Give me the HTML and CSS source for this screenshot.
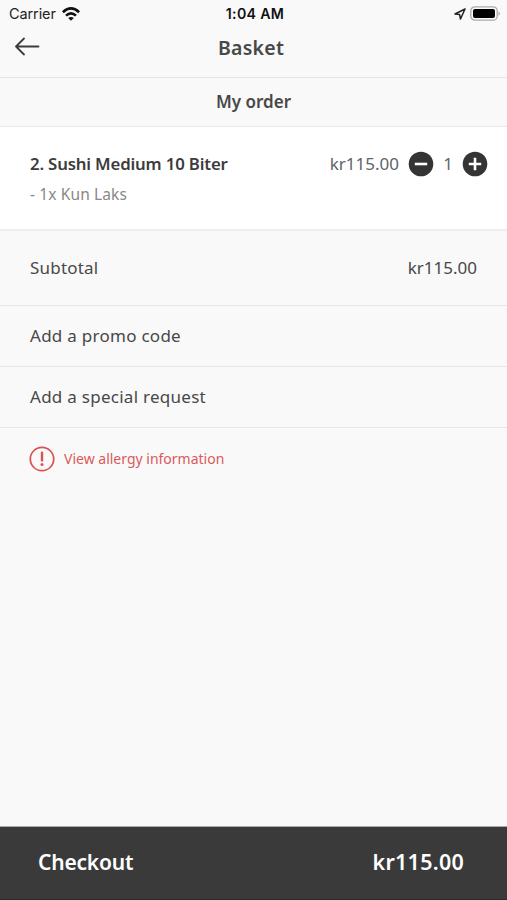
FILE: index.html
```html
<!DOCTYPE html>
<html lang="en">
<head>
<meta charset="utf-8">
<title>Basket</title>
<link rel="stylesheet" href="styles.css">
</head>
<body>
<div class="status">
  <div class="carrier"><span class="carrier-name">Carrier</span>
    <svg width="18" height="14" viewBox="0 0 18 14" fill="none" stroke="#111" stroke-width="2.6"><path d="M.9 5.2Q9-2.3 17.1 5.2M4 8.6Q9 4 14 8.6"/><path d="M9 13.8 6.2 11Q9 8.8 11.8 11Z" fill="#111" stroke="none"/></svg>
  </div>
  <span class="clock">1:04 AM</span>
  <div class="indicators">
    <svg width="12" height="12" viewBox="0 0 12 12" fill="none" stroke="#222" stroke-width="1.5" stroke-linejoin="round"><path d="M11 1 1 6l4.6.6L6.5 11Z"/></svg>
    <svg width="31" height="15" viewBox="0 0 31 15"><rect x=".8" y=".8" width="26.4" height="13.4" rx="4" fill="none" stroke="#aaa" stroke-width="1.3"/><rect x="3" y="3" width="22" height="9" rx="2" fill="#000"/><path d="M28.5 5.2q3 2.3 0 4.6Z" fill="#aaa"/></svg>
  </div>
</div>
<header class="header">
  <svg class="back" width="26" height="20" viewBox="0 0 26 20" fill="none" stroke="#3c3c3c" stroke-width="1.8" stroke-linecap="round" stroke-linejoin="round"><path d="M24.5 9.5H2M10 1.5 2 9.5l8 8"/></svg>
  <h1 class="title">Basket</h1>
</header>
<h2 class="section"><span class="section-text">My order</span></h2>
<section class="item">
  <div class="item-info">
    <div class="item-name">2. Sushi Medium 10 Biter</div>
    <div class="item-option">- 1x Kun Laks</div>
  </div>
  <div class="item-controls">
    <span class="item-price">kr115.00</span>
    <svg width="26" height="26" viewBox="0 0 26 26"><circle cx="13" cy="13" r="12.3" fill="#343434"/><path d="M6.8 13h12.4" stroke="#fff" stroke-width="2.6"/></svg>
    <span class="quantity">1</span>
    <svg width="26" height="26" viewBox="0 0 26 26"><circle cx="13" cy="13" r="12.3" fill="#343434"/><path d="M6.8 13h12.4M13 6.8v12.4" stroke="#fff" stroke-width="2.6"/></svg>
  </div>
</section>
<div class="row subtotal"><span class="subtotal-label">Subtotal</span><span class="subtotal-price">kr115.00</span></div>
<div class="row"><span class="action">Add a promo code</span></div>
<div class="row"><span class="action">Add a special request</span></div>
<div class="allergy">
  <svg width="26" height="26" viewBox="0 0 26 26" fill="none" stroke="#d9534f"><circle cx="13" cy="13" r="11.7" stroke-width="1.7"/><path d="M13 6.8v7.6" stroke-width="2.4" stroke-linecap="round"/><circle cx="13" cy="18.6" r="1.5" fill="#d9534f" stroke="none"/></svg>
  <span class="allergy-text">View allergy information</span>
</div>
<footer class="checkout"><span class="checkout-label">Checkout</span><span class="checkout-price">kr115.00</span></footer>
</body>
</html>
```
FILE: styles.css
```css
* { box-sizing: border-box; }
body {
  margin: 0;
  height: 900px;
  display: flex;
  flex-direction: column;
  background: #f9f9f9;
  color: #484848;
  font: 17px/24px "Noto Sans", sans-serif;
  white-space: nowrap;
  overflow: hidden;
}
svg { display: block; flex: none; }
.status {
  height: 28px;
  padding: 0 6px 1px 9px;
  display: grid;
  grid-template-columns: 1fr auto 1fr;
  align-items: center;
  font: 14px/20px Inter, sans-serif;
  color: #222;
}
.carrier { display: flex; align-items: center; gap: 6px; }
.carrier-name { font-size: 14.5px; margin-top: 1px; letter-spacing: -0.1px; }
.clock { margin-top: 1px; font-size: 14.2px; font-weight: 600; letter-spacing: 0.3px; color: #111; }
.indicators { display: flex; justify-content: flex-end; align-items: center; gap: 4px; }
.header {
  height: 50px;
  padding: 0 14px 11px;
  display: grid;
  grid-template-columns: 26px 1fr 31px;
  align-items: center;
  border-bottom: 1px solid #e5e5e5;
}
.title { margin: 1px 0 0; text-align: center; font-size: 19.5px; font-weight: 600; letter-spacing: 0.25px; }
.section {
  margin: 0;
  height: 49px;
  display: flex;
  justify-content: center;
  align-items: center;
  border-bottom: 1px solid #e9e9e9;
  font-size: 17px;
  font-weight: 600;
}
.item {
  height: 104px;
  padding: 24px 19px 0 30px;
  display: flex;
  justify-content: space-between;
  background: #fff;
  border-bottom: 2px solid #eee;
}
.item-name { padding-top: 1px; font-size: 16.8px; font-weight: 600; letter-spacing: -0.17px; color: #3c3c3c; }
.item-option { margin-top: 6px; font-size: 15.5px; letter-spacing: 0.12px; color: #888; }
.item-controls { display: flex; align-items: center; height: 26px; color: #60646a; }
.item-price { margin-right: 9px; }
.quantity { width: 28px; text-align: center; }
.row {
  height: 61px;
  padding: 0 30px;
  display: flex;
  align-items: center;
  justify-content: space-between;
  border-bottom: 1px solid #e7e7e7;
}
.subtotal { height: 75px; }
.subtotal-label { letter-spacing: 0.2px; }
.action { letter-spacing: 0.27px; }
.allergy { display: flex; align-items: center; gap: 9px; padding: 18px 29px; color: #d9595c; font-size: 14px; }
.checkout {
  margin-top: auto;
  height: 74px;
  padding: 0 43px 3px 38px;
  display: flex;
  align-items: center;
  justify-content: space-between;
  background: #3a3a3a;
  border-top: 1px solid #aaa;
  border-bottom: 1px solid #30282a;
  color: #fff;
  font-size: 21px;
  font-weight: 600;
}
.checkout-label { letter-spacing: -0.2px; }
.checkout-price { font-size: 21.5px; letter-spacing: 0.25px; }
```
